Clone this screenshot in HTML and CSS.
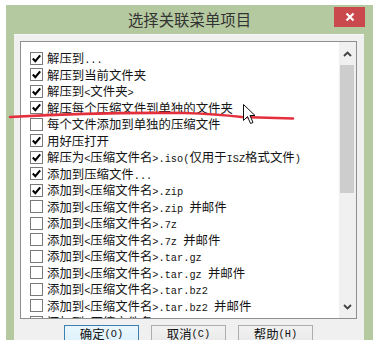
FILE: index.html
```html
<!DOCTYPE html>
<html lang="zh-CN">
<head>
<meta charset="utf-8">
<title>选择关联菜单项目</title>
<link rel="stylesheet" href="styles.css">
</head>
<body>
<div class="window">
  <div class="titlebar">
    <span></span>
    <span class="title">选择关联菜单项目</span>
    <button class="close" aria-label="关闭">
      <svg width="10" height="10" viewBox="0 0 10 10"><path d="M1.5 1.5 L8.5 8.5 M8.5 1.5 L1.5 8.5" stroke="#fff" stroke-width="2.2" fill="none"/></svg>
    </button>
  </div>
  <div class="panel">
    <div class="listbox">
      <ul class="items">
        <li class="item on"><span class="cb"></span><span>解压到<span class="en">...</span></span></li>
        <li class="item on"><span class="cb"></span><span>解压到当前文件夹</span></li>
        <li class="item on"><span class="cb"></span><span>解压到<span class="en">&lt;</span>文件夹<span class="en">&gt;</span></span></li>
        <li class="item on"><span class="cb"></span><span>解压每个压缩文件到单独的文件夹</span></li>
        <li class="item"><span class="cb"></span><span>每个文件添加到单独的压缩文件</span></li>
        <li class="item on"><span class="cb"></span><span>用好压打开</span></li>
        <li class="item on"><span class="cb"></span><span>解压为<span class="en">&lt;</span>压缩文件名<span class="en">&gt;.iso(</span>仅用于<span class="en">ISZ</span>格式文件<span class="en">)</span></span></li>
        <li class="item on"><span class="cb"></span><span>添加到压缩文件<span class="en">...</span></span></li>
        <li class="item on"><span class="cb"></span><span>添加到<span class="en">&lt;</span>压缩文件名<span class="en">&gt;.zip</span></span></li>
        <li class="item"><span class="cb"></span><span>添加到<span class="en">&lt;</span>压缩文件名<span class="en">&gt;.zip </span>并邮件</span></li>
        <li class="item"><span class="cb"></span><span>添加到<span class="en">&lt;</span>压缩文件名<span class="en">&gt;.7z</span></span></li>
        <li class="item"><span class="cb"></span><span>添加到<span class="en">&lt;</span>压缩文件名<span class="en">&gt;.7z </span>并邮件</span></li>
        <li class="item"><span class="cb"></span><span>添加到<span class="en">&lt;</span>压缩文件名<span class="en">&gt;.tar.gz</span></span></li>
        <li class="item"><span class="cb"></span><span>添加到<span class="en">&lt;</span>压缩文件名<span class="en">&gt;.tar.gz </span>并邮件</span></li>
        <li class="item"><span class="cb"></span><span>添加到<span class="en">&lt;</span>压缩文件名<span class="en">&gt;.tar.bz2</span></span></li>
        <li class="item"><span class="cb"></span><span>添加到<span class="en">&lt;</span>压缩文件名<span class="en">&gt;.tar.bz2 </span>并邮件</span></li>
        <li class="item"><span class="cb"></span><span>添加到<span class="en">&lt;</span>压缩文件名<span class="en">&gt;.tgz</span></span></li>
      </ul>
      <div class="scrollbar">
        <div class="arrow up">
          <svg width="9" height="6" viewBox="0 0 9 6"><path d="M1 5 L4.5 1.5 L8 5" stroke="#404040" stroke-width="1.8" fill="none"/></svg>
        </div>
        <div class="track"><div class="thumb"></div></div>
        <div class="arrow down">
          <svg width="9" height="6" viewBox="0 0 9 6"><path d="M1 1 L4.5 4.5 L8 1" stroke="#404040" stroke-width="1.8" fill="none"/></svg>
        </div>
      </div>
    </div>
    <div class="buttons">
      <button class="btn default">确定<span class="en">(O)</span></button>
      <button class="btn">取消<span class="en">(C)</span></button>
      <button class="btn">帮助<span class="en">(H)</span></button>
    </div>
  </div>
</div>
<svg class="annot" width="378" height="340" viewBox="0 0 378 340">
  <path d="M10 117 Q 100 112 185 113 Q 215 114 242 117 L 293 118.5" stroke="#e3303c" stroke-width="2.6" fill="none" stroke-linecap="round"/>
  <path d="M243.5 104.5 L243.5 120.5 L247.5 116.5 L250.5 123.5 L253 122.5 L250 115.5 L255 115.5 Z" fill="#fff" stroke="#111" stroke-width="1" stroke-linejoin="round"/>
</svg>
</body>
</html>
```
FILE: styles.css
```css
html, body {
  margin: 0;
  padding: 0;
  background: #ffffff;
  width: 378px;
  height: 340px;
  overflow: hidden;
}

body {
  position: relative;
  font-family: "Noto Sans CJK SC", "Noto Sans", sans-serif;
  color: #111;
}

.window {
  margin: 5px 0 0 6px;
  width: 367px;
  height: 340px;
  background: #b5c9a0;
  display: flex;
  flex-direction: column;
}

.titlebar {
  height: 29px;
  display: grid;
  grid-template-columns: 1fr auto 1fr;
  align-items: start;
}

.title {
  font-size: 15.4px;
  line-height: 29px;
  color: #333;
}

.close {
  justify-self: end;
  margin: 2px 8px 0 0;
  width: 31px;
  height: 20px;
  padding: 0;
  border: none;
  background: #c9494c;
  display: flex;
  align-items: center;
  justify-content: center;
}

.panel {
  margin: 0 9px 0 8px;
  flex: 1;
  background: #f0f0f0;
  padding: 6px 7px 0 6px;
  box-sizing: border-box;
  border-top: 1px solid #f7f7f7;
}

.listbox {
  height: 278px;
  box-sizing: border-box;
  border: 1px solid #8e8f8f;
  background: #fff;
  display: flex;
}

.items {
  list-style: none;
  margin: 0;
  padding: 8px 0 0 9px;
  flex: 1;
  overflow: hidden;
}

.item {
  height: 16.5px;
  display: flex;
  align-items: center;
  gap: 4px;
  font-size: 12.4px;
  white-space: nowrap;
  color: #141414;
}

.en {
  font-family: "Liberation Mono", monospace;
  font-size: 10.3px;
}

.cb {
  width: 11px;
  height: 11px;
  border: 1px solid #7a7a7a;
  background: #fff;
  flex: none;
}

.item.on .cb {
  background-image: url("data:image/svg+xml;utf8,<svg xmlns='http://www.w3.org/2000/svg' width='11' height='11' viewBox='0 0 11 11'><path d='M1.8 5.6 L4.3 8.2 L9.2 2.4' stroke='%23000' stroke-width='2.1' fill='none'/></svg>");
  background-repeat: no-repeat;
  background-position: center;
}

.scrollbar {
  width: 17px;
  flex: none;
  background: #f0f0f0;
  display: flex;
  flex-direction: column;
}

.arrow {
  height: 23px;
  display: flex;
  align-items: center;
  justify-content: center;
}

.track {
  flex: 1;
  padding: 0 2px 0 1px;
}

.thumb {
  height: 128px;
  background: #cdcdcd;
}

.buttons {
  display: flex;
  justify-content: center;
  gap: 12px;
  margin-top: 6px;
}

.btn {
  width: 75px;
  height: 23px;
  padding: 0;
  border: 1px solid #adadad;
  background: linear-gradient(#f2f2f2, #e6e6e6);
  font-family: "Noto Sans CJK SC", sans-serif;
  font-size: 12.4px;
  line-height: 15px;
  color: #111;
  display: flex;
  justify-content: center;
  align-items: flex-start;
  padding-top: 1px;
  box-sizing: border-box;
}

.btn .en {
  line-height: 15px;
}

.btn.default {
  border-color: #3c7fb1;
  background: linear-gradient(#eaf6fd, #d9f0fc);
}

.annot {
  position: absolute;
  left: 0;
  top: 0;
  pointer-events: none;
}
```
